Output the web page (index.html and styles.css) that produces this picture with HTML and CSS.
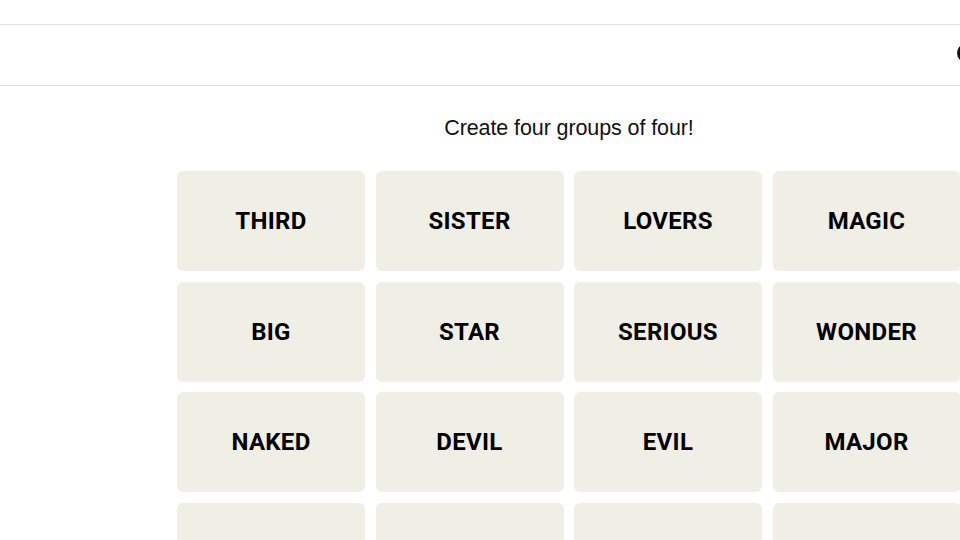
FILE: index.html
```html
<!DOCTYPE html>
<html>
<head>
<meta charset="utf-8">
<link rel="stylesheet" href="styles.css">
</head>
<body>
<div class="topbar"></div>
<header class="header">
  <span class="header-icon"></span>
</header>
<main class="game">
  <p class="prompt">Create four groups of four!</p>
  <div class="board">
    <div class="tile">THIRD</div>
    <div class="tile">SISTER</div>
    <div class="tile">LOVERS</div>
    <div class="tile">MAGIC</div>
    <div class="tile">BIG</div>
    <div class="tile">STAR</div>
    <div class="tile">SERIOUS</div>
    <div class="tile">WONDER</div>
    <div class="tile">NAKED</div>
    <div class="tile">DEVIL</div>
    <div class="tile">EVIL</div>
    <div class="tile">MAJOR</div>
    <div class="tile"></div>
    <div class="tile"></div>
    <div class="tile"></div>
    <div class="tile"></div>
  </div>
</main>
</body>
</html>
```
FILE: styles.css
```css
html, body {
  margin: 0;
  padding: 0;
  background: #ffffff;
  overflow: hidden;
  width: 960px;
  height: 540px;
}
body {
  font-family: "Liberation Sans", Arial, sans-serif;
  color: #000;
}
.topbar {
  height: 24px;
  border-bottom: 1px solid #e2e2e2;
}
.header {
  height: 60px;
  border-bottom: 1px solid #dcdcdc;
  display: flex;
  justify-content: flex-end;
  align-items: center;
  overflow: hidden;
}
.header-icon {
  width: 14px;
  height: 14px;
  border: 3px solid #111;
  border-radius: 50%;
  margin-right: -17px;
  margin-top: -4px;
  flex: none;
}
.game {
  margin-left: 177px;
  width: 784px;
}
.prompt {
  margin: 29px 0 0;
  text-align: center;
  font-size: 21.5px;
  line-height: 26px;
  color: #121212;
  letter-spacing: -0.1px;
}
.board {
  margin-top: 30px;
  display: grid;
  grid-template-columns: repeat(4, 188px);
  grid-auto-rows: 100px;
  column-gap: 10.5px;
  row-gap: 10.5px;
}
.tile {
  background: #efefe6;
  border-radius: 6px;
  display: flex;
  align-items: center;
  justify-content: center;
  font-family: "Roboto", "Liberation Sans", sans-serif;
  font-weight: 700;
  font-size: 24px;
  letter-spacing: 0.3px;
  color: #000;
}
```
